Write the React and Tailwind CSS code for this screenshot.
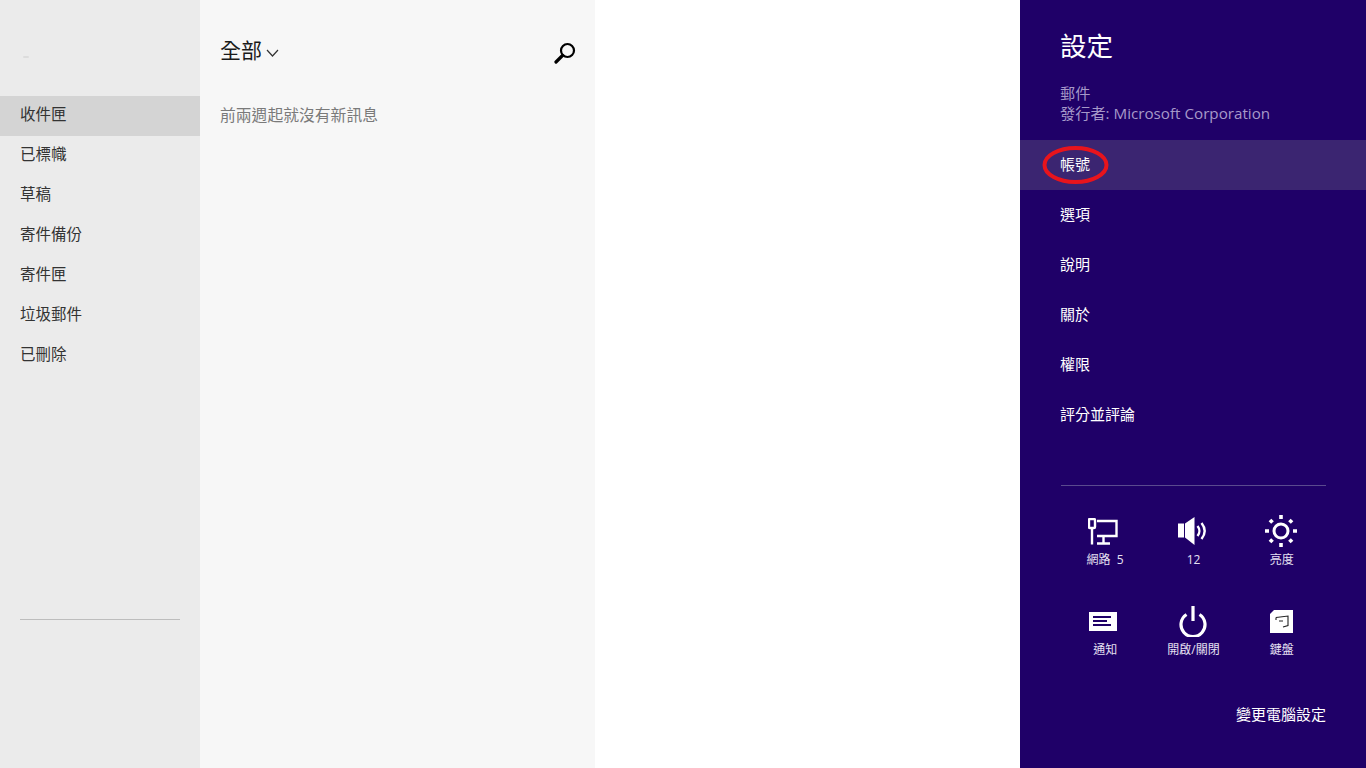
import React from 'react';

const font = { fontFamily: '"Open Sans", "Noto Sans CJK TC", sans-serif' };

const folders = ['收件匣', '已標幟', '草稿', '寄件備份', '寄件匣', '垃圾郵件', '已刪除'];
const settings = ['帳號', '選項', '說明', '關於', '權限', '評分並評論'];

const NetworkIcon = () => (
  <svg width="30" height="27" viewBox="0 0 30 27" fill="none" stroke="white" strokeWidth="2.4" className="mr-[4px]">
    <rect x="1" y="1" width="6" height="9" rx="1" strokeWidth="2.4" />
    <path d="M4 9V26.5" />
    <path d="M9 3H28.5V18H9" />
    <path d="M15.5 18V25M9 25.5H22" />
  </svg>
);

const VolumeIcon = () => (
  <svg width="28" height="28" viewBox="0 0 28 28" fill="white" className="mr-[2px]">
    <path d="M0 6.5H6V20.5H0Z" />
    <path d="M7 6.5L16.5 0V28L7 20.5Z" />
    <path d="M19.5 9C22 12 22 16 19.5 19M23.5 6C27.5 11 27.5 17 23.5 22" fill="none" stroke="white" strokeWidth="2.4" />
  </svg>
);

const SunIcon = () => (
  <svg width="32" height="32" viewBox="0 0 32 32" fill="none" stroke="white" className="mr-[2px]">
    <circle cx="16" cy="16" r="7" strokeWidth="3" />
    <path d="M16 0V4M16 28V32M0 16H4M28 16H32" strokeWidth="3.6" />
    <path d="M5 5L7.5 7.5M24.5 24.5L27 27M27 5L24.5 7.5M7.5 24.5L5 27" strokeWidth="3.8" />
  </svg>
);

const NotifyIcon = () => (
  <svg width="28" height="19" viewBox="0 0 28 19" className="mr-[4px]">
    <path d="M0 0H28V19H0Z" fill="white" />
    <path d="M4 5H22M4 9H18M4 13H22" stroke="#1f0068" strokeWidth="1.8" />
  </svg>
);

const PowerIcon = () => (
  <svg width="28" height="31" viewBox="0 0 28 31" fill="none" stroke="white" strokeWidth="3.2">
    <path d="M14 0V15" />
    <path d="M7.5 8.5A12 12 0 1 0 20.5 8.5" />
  </svg>
);

const KeyboardIcon = () => (
  <svg width="23" height="23" viewBox="0 0 23 23" className="mr-[1px]">
    <path d="M4 0H23V23H0V4Z" fill="white" />
    <path d="M6 7.5L18 6V15.5L13 17M6 7.5V10M9 11H13" fill="none" stroke="#222" strokeWidth="1.1" />
  </svg>
);

const tiles = [
  { icon: <NetworkIcon />, label: '網路  5' },
  { icon: <VolumeIcon />, label: '12' },
  { icon: <SunIcon />, label: '亮度' },
  { icon: <NotifyIcon />, label: '通知' },
  { icon: <PowerIcon />, label: '開啟/關閉' },
  { icon: <KeyboardIcon />, label: '鍵盤' },
];

export default function App() {
  return (
    <div className="flex h-screen w-full overflow-hidden bg-white" style={font}>
      {/* Folder list */}
      <div className="w-[200px] shrink-0 bg-[#ebebeb] flex flex-col pt-[56px]">
        <div className="h-[40px] pl-[23px]">
          <div className="w-[6px] h-[2px] bg-[#dcdcdc] rounded-full" />
        </div>
        {folders.map((name, i) => (
          <div
            key={name}
            className={`h-10 pl-5 pb-[2px] flex items-center text-[15.5px] text-[#333333] ${i === 0 ? 'bg-[#d4d4d4]' : ''}`}
          >
            {name}
          </div>
        ))}
        <div className="mt-[243px] mx-5 border-t border-[#bdbdbd]" />
      </div>

      {/* Message list */}
      <div className="w-[395px] shrink-0 bg-[#f7f7f7] pl-5 pr-[19px]">
        <div className="h-[102px] flex items-center justify-between">
          <div className="flex items-center gap-1 text-[21px] text-[#1a1a1a]">
            全部
            <svg width="13" height="8" viewBox="0 0 13 8" fill="none" stroke="#333" strokeWidth="1.2" className="mt-1">
              <path d="M1 1L6.5 7L12 1" />
            </svg>
          </div>
          <svg width="22" height="22" viewBox="0 0 22 22" fill="none" stroke="black" className="mt-1">
            <circle cx="13.5" cy="8.5" r="6.5" strokeWidth="2.2" />
            <path d="M8.5 13.5L2 20" strokeWidth="3.2" strokeLinecap="round" />
          </svg>
        </div>
        <div className="text-[15.8px] leading-6 text-[#7a7a7a] mt-px">前兩週起就沒有新訊息</div>
      </div>

      <div className="flex-1 bg-white" />

      {/* Settings charm */}
      <div className="w-[346px] shrink-0 bg-[#1f0068] flex flex-col text-white">
        <div className="h-[83px] pl-10 pt-[27px] text-[26.5px] leading-[38px]">設定</div>
        <div className="pl-10 text-[15.2px] leading-5 text-[#a699c9] h-[57px]">
          <div>郵件</div>
          <div>發行者: Microsoft Corporation</div>
        </div>
        {settings.map((name, i) => (
          <div
            key={name}
            className={`relative h-[50px] pl-10 pb-[2px] flex items-center text-[15px] ${i === 0 ? 'bg-[#3b2571]' : ''}`}
          >
            {name}
            {i === 0 && (
              <svg width="68" height="38" viewBox="0 0 68 38" fill="none" className="absolute left-[22px] top-[6px]">
                <ellipse cx="33.5" cy="19" rx="31" ry="17" stroke="#e8141c" strokeWidth="4" />
              </svg>
            )}
          </div>
        ))}
        <div className="mt-[45px] ml-[41px] mr-[40px] border-t border-[#5a4a8e]" />
        <div className="mt-[29px] ml-[41px] mr-[40px] grid grid-cols-3 gap-y-[36px]">
          {tiles.map((t) => (
            <div key={t.label} className="flex flex-col items-center">
              <div className="h-[32px] flex items-center justify-center">{t.icon}</div>
              <div className="mt-[4px] text-[12px] leading-[18px] whitespace-pre text-[#e6e1f2]">{t.label}</div>
            </div>
          ))}
        </div>
        <div className="mt-[45px] pr-[40px] text-right text-[15px] leading-5">變更電腦設定</div>
      </div>
    </div>
  );
}
